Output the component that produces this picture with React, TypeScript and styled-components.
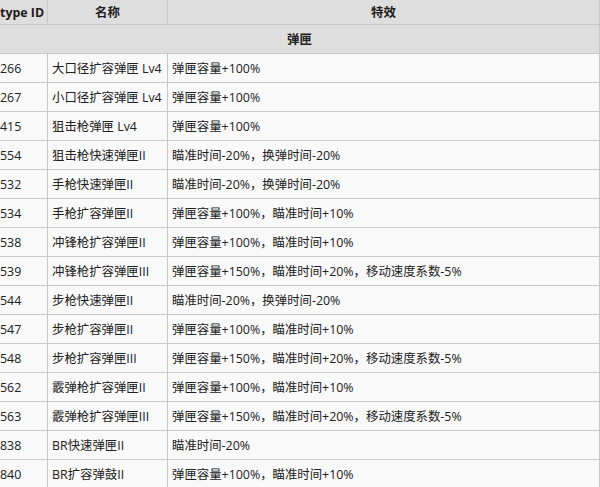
import styled, { createGlobalStyle } from 'styled-components';

const GlobalStyle = createGlobalStyle`
	html, body {
		margin: 0;
		padding: 0;
		background: #f9f9f9;
	}
	body {
		font-family: 'Open Sans', 'Noto Sans CJK SC', sans-serif;
		color: #202020;
	}
`;

const Wrap = styled.div`
	width: 600px;
	height: 487px;
	overflow: hidden;
`;

const Table = styled.table`
	width: 600px;
	border-collapse: collapse;
	table-layout: fixed;
	font-size: 12.4px;
	background: #f9f9f9;
`;

// $w is the content width, padding comes on top of it
const Th = styled.th<{ $w?: number }>`
	width: ${(p) => (p.$w ? `${p.$w}px` : 'auto')};
	height: 24px;
	padding: 0 4px;
	background: #dedede;
	border: 1px solid #c8c8c8;
	border-top: none;
	font-weight: bold;
	text-align: center;
	white-space: nowrap;
	overflow: hidden;
	&:first-child {
		border-left: none;
		text-align: left;
		padding-left: 0;
	}
`;

const Section = styled.td`
	height: 28px;
	padding: 0 4px;
	background: #dedede;
	border: 1px solid #c8c8c8;
	border-left: none;
	font-weight: bold;
	text-align: center;
`;

const Td = styled.td`
	height: 28px;
	padding: 0 4px;
	border: 1px solid #c8c8c8;
	white-space: nowrap;
	overflow: hidden;
	&:first-child {
		border-left: none;
		padding-left: 0;
	}
`;

interface IRow {
	id: string;
	name: string;
	effect: string;
}

const rows: IRow[] = [
	{ id: '266', name: '大口径扩容弹匣 Lv4', effect: '弹匣容量+100%' },
	{ id: '267', name: '小口径扩容弹匣 Lv4', effect: '弹匣容量+100%' },
	{ id: '415', name: '狙击枪弹匣 Lv4', effect: '弹匣容量+100%' },
	{ id: '554', name: '狙击枪快速弹匣II', effect: '瞄准时间-20%，换弹时间-20%' },
	{ id: '532', name: '手枪快速弹匣II', effect: '瞄准时间-20%，换弹时间-20%' },
	{ id: '534', name: '手枪扩容弹匣II', effect: '弹匣容量+100%，瞄准时间+10%' },
	{ id: '538', name: '冲锋枪扩容弹匣II', effect: '弹匣容量+100%，瞄准时间+10%' },
	{ id: '539', name: '冲锋枪扩容弹匣III', effect: '弹匣容量+150%，瞄准时间+20%，移动速度系数-5%' },
	{ id: '544', name: '步枪快速弹匣II', effect: '瞄准时间-20%，换弹时间-20%' },
	{ id: '547', name: '步枪扩容弹匣II', effect: '弹匣容量+100%，瞄准时间+10%' },
	{ id: '548', name: '步枪扩容弹匣III', effect: '弹匣容量+150%，瞄准时间+20%，移动速度系数-5%' },
	{ id: '562', name: '霰弹枪扩容弹匣II', effect: '弹匣容量+100%，瞄准时间+10%' },
	{ id: '563', name: '霰弹枪扩容弹匣III', effect: '弹匣容量+150%，瞄准时间+20%，移动速度系数-5%' },
	{ id: '838', name: 'BR快速弹匣II', effect: '瞄准时间-20%' },
	{ id: '840', name: 'BR扩容弹鼓II', effect: '弹匣容量+100%，瞄准时间+10%' },
];

function App() {
	return (
		<Wrap>
			<GlobalStyle />
			<Table>
				<thead>
					<tr>
						<Th $w={43}>type ID</Th>
						<Th $w={111}>名称</Th>
						<Th>特效</Th>
					</tr>
				</thead>
				<tbody>
					<tr>
						<Section colSpan={3}>弹匣</Section>
					</tr>
					{rows.map((row) => (
						<tr key={row.id}>
							<Td>{row.id}</Td>
							<Td>{row.name}</Td>
							<Td>{row.effect}</Td>
						</tr>
					))}
				</tbody>
			</Table>
		</Wrap>
	);
}

export default App;
